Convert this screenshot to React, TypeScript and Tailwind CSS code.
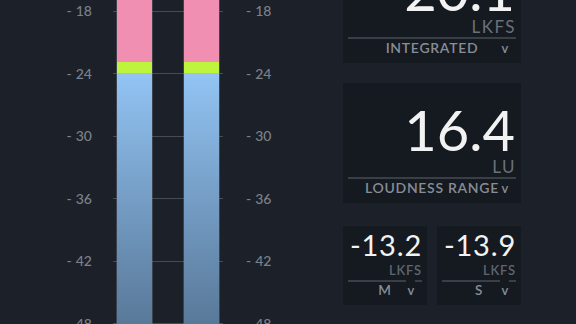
import React from 'react';

const scale = ['18', '24', '30', '36', '42', '48'];

function ScaleLabels({ align }: { align: 'left' | 'right' }) {
  return (
    <div className={align === 'right' ? 'flex w-[92px] flex-col items-end' : 'flex w-[40px] flex-col items-start'}>
      {scale.map((v) => (
        <div key={v} className="flex h-[62.5px] items-center text-[14px] font-medium leading-none text-[#7b818a]">
          <span>-</span>
          <span className="ml-[4px]">{v}</span>
        </div>
      ))}
    </div>
  );
}

function Bar() {
  return (
    <div className="flex w-[35px] flex-col shadow-[0_0_0_1px_rgba(140,150,165,0.3)]">
      <div className="h-[82px] bg-[#f08fb1]" />
      <div className="h-[11px] bg-[#bef43e]" />
      <div className="flex-1 bg-gradient-to-b from-[#93c4f4] to-[#52708e]" />
    </div>
  );
}

function Meter() {
  return (
    <div className="-mt-[20.25px] flex h-[375px]">
      <ScaleLabels align="right" />
      {/* tick lines under the two bars */}
      <div className="ml-[21px] grid w-[110px]">
        <div className="col-start-1 row-start-1 flex flex-col">
          {scale.map((v) => (
            <div key={v} className="flex h-[62.5px] items-center">
              <div className="h-px w-full bg-[#464b54]" />
            </div>
          ))}
        </div>
        <div className="col-start-1 row-start-1 flex gap-[32px] px-[4px]">
          <Bar />
          <Bar />
        </div>
      </div>
      <div className="ml-[23px]">
        <ScaleLabels align="left" />
      </div>
    </div>
  );
}

function Selector({ label, small }: { label: string; small?: boolean }) {
  return (
    <div
      className={
        small
          ? 'relative px-[12px] text-[13.5px] font-semibold leading-[20px] tracking-[0.8px] text-[#878d96]'
          : 'relative whitespace-nowrap px-[15px] text-[14px] font-semibold leading-[16px] tracking-[0.7px] text-[#878d96]'
      }
    >
      <div className="flex justify-center-safe">
        <span className="shrink-0">{label}</span>
      </div>
      <span className="absolute right-[7px] top-0 bg-[#151920] pl-[1px] text-[13px] font-semibold">v</span>
    </div>
  );
}

function BigPanel({ value, unit, label }: { value: string; unit: string; label: string }) {
  return (
    <div className="flex h-[120px] w-[178px] flex-col overflow-hidden bg-[#151920] px-[5px]">
      <div className="pt-[19px] pr-[1px] text-right text-[56px] leading-[56px] text-[#f2f2f2]">{value}</div>
      <div className="text-right text-[17px] leading-[17px] tracking-[1.5px] text-[#6b7179]">{unit}</div>
      <div className="mt-[2px] h-[2px] bg-[#393e47]" />
      <div className="mt-[1px]">
        <Selector label={label} />
      </div>
    </div>
  );
}

function SmallPanel({ value, label }: { value: string; label: string }) {
  return (
    <div className="flex h-[79px] w-[84px] flex-col bg-[#151920] px-[5px]">
      <div className="pt-[4px] text-right text-[29px] leading-[30px] tracking-[0.8px] text-[#f2f2f2]">{value}</div>
      <div className="mt-[3px] text-right text-[13px] font-semibold leading-[14px] tracking-[0.8px] text-[#5f656e]">LKFS</div>
      <div className="mt-[3px] h-[2px] bg-[#393e47]" />
      <div className="-mt-[2px]">
        <Selector label={label} small />
      </div>
    </div>
  );
}

export default function App() {
  return (
    <div className="flex h-[324px] w-[576px] overflow-hidden bg-[#1c2029] font-['Lato',sans-serif]">
      <Meter />
      <div className="ml-auto mr-[55px] flex -mt-[57px] w-[178px] flex-col">
        <BigPanel value="-20.1" unit="LKFS" label="INTEGRATED" />
        <div className="mt-[20px]">
          <BigPanel value="16.4" unit="LU" label="LOUDNESS RANGE" />
        </div>
        <div className="mt-[23px] flex gap-[10px]">
          <SmallPanel value="-13.2" label="M" />
          <SmallPanel value="-13.9" label="S" />
        </div>
      </div>
    </div>
  );
}
